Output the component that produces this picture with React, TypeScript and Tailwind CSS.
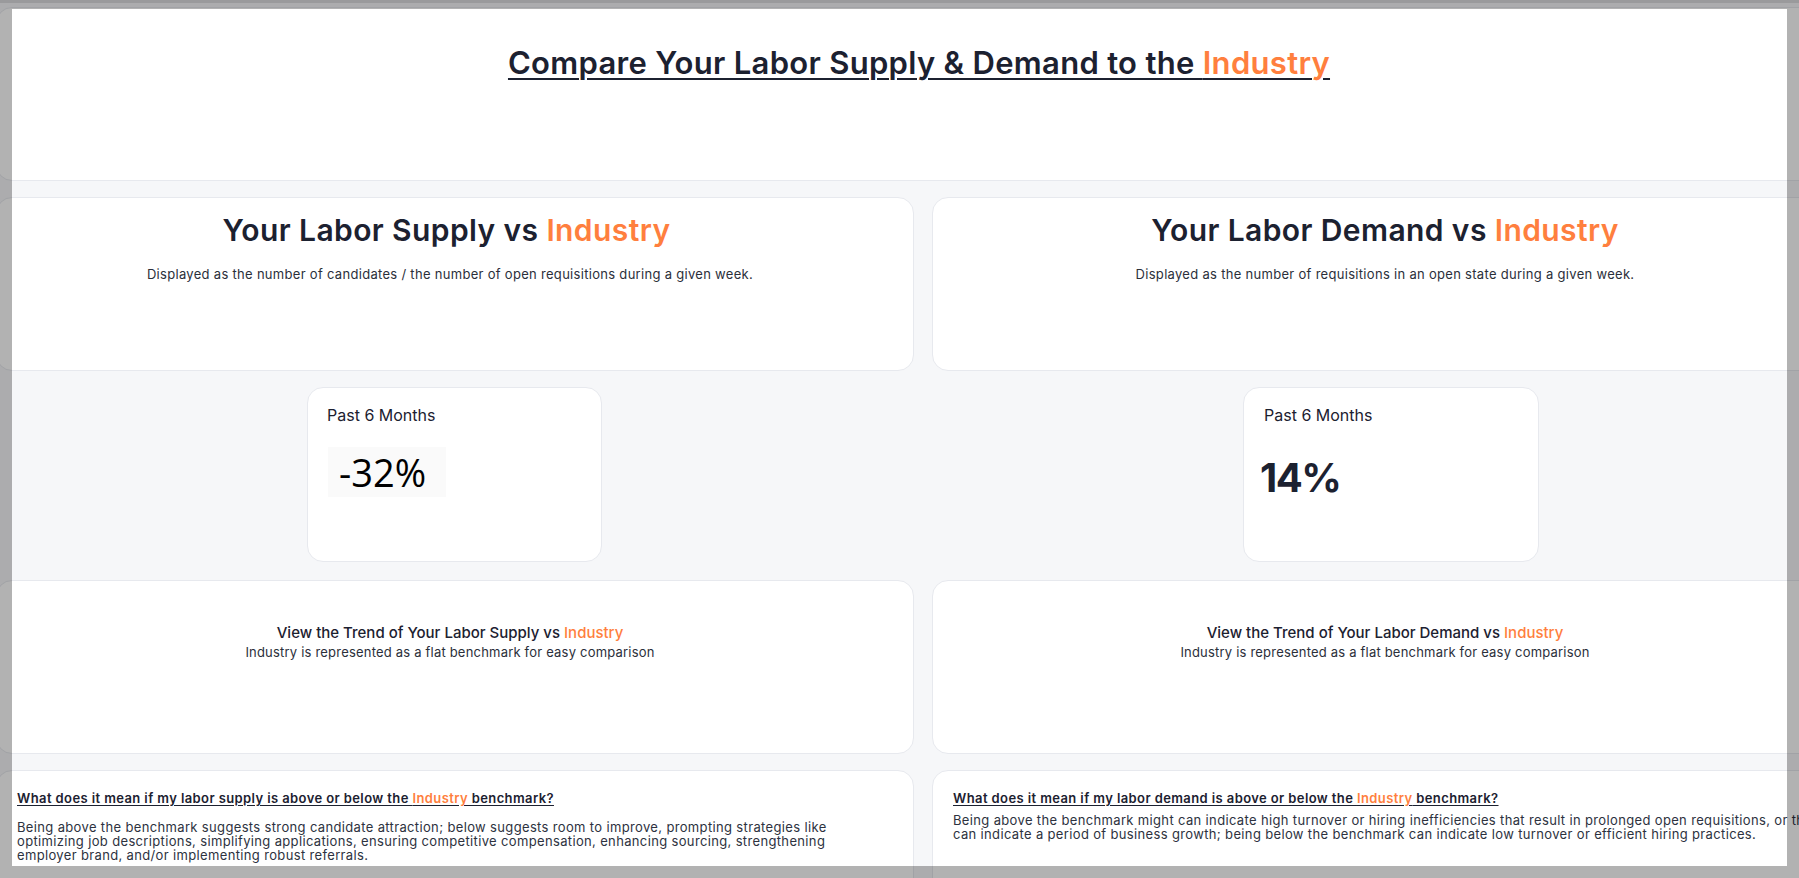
import React from "react";

const OR = "text-[#ff7f3e]";

function Card({ children, className = "" }: { children?: React.ReactNode; className?: string }) {
  return (
    <div className={`bg-white border border-[#e7e9ee] rounded-[16px] ${className}`}>{children}</div>
  );
}

export default function App() {
  return (
    <div
      className="relative w-[1799px] h-[878px] overflow-hidden bg-[#f6f7f9] text-[#1c2130]"
      style={{ fontFamily: "Inter, 'Noto Sans', Arial, sans-serif" }}
    >
      <div className="ml-[-4px] w-[1842px] flex flex-col pt-[7px]">
        {/* Header */}
        <Card className="h-[174px] pt-[37px] text-center pl-[4px]">
          <h1 className="text-[31px] leading-[36px] font-semibold underline decoration-2 underline-offset-[4px] tracking-[0.3px]">
            Compare Your Labor Supply &amp; Demand to the <span className={OR}>Industry</span>
          </h1>
        </Card>

        {/* Supply / demand titles */}
        <div className="grid grid-cols-[918px_906px] gap-[18px] mt-[16px]">
          <Card className="h-[174px] pt-[14px] text-center">
            <h2 className="text-[30px] leading-[36px] font-semibold tracking-[0.4px] pr-[17px]">
              Your Labor Supply vs <span className={OR}>Industry</span>
            </h2>
            <p className="mt-[17px] text-[13px] leading-[18px] tracking-[0.3px] text-[#2b2f3a] pr-[10px]">
              Displayed as the number of candidates / the number of open requisitions during a given week.
            </p>
          </Card>
          <Card className="h-[174px] pt-[14px] text-center">
            <h2 className="text-[30px] leading-[36px] font-semibold tracking-[0.4px]">
              Your Labor Demand vs <span className={OR}>Industry</span>
            </h2>
            <p className="mt-[17px] text-[13px] leading-[18px] tracking-[0.3px] text-[#2b2f3a]">
              Displayed as the number of requisitions in an open state during a given week.
            </p>
          </Card>
        </div>

        {/* KPI row */}
        <div className="grid grid-cols-[918px_906px] gap-[18px] h-[208px] pt-[16px]">
          <div>
            <Card className="ml-[311px] w-[295px] h-[175px] pt-[15px] pl-[19px]">
              <div className="text-[16px] leading-[24px] text-[#1c2130]">Past 6 Months</div>
              <div className="mt-[20px] ml-[1px] w-[118px] h-[50px] bg-[#fafafa] flex items-center pl-[11px]">
                <span
                  className="text-[38px] leading-[50px] text-black"
                  style={{ fontFamily: "'Open Sans', 'Noto Sans', sans-serif" }}
                >
                  -32%
                </span>
              </div>
            </Card>
          </div>
          <div>
            <Card className="ml-[311px] w-[296px] h-[175px] pt-[15px] pl-[20px]">
              <div className="text-[16px] leading-[24px] text-[#1c2130]">Past 6 Months</div>
              <div className="mt-[26px] ml-[-4px] text-[40px] leading-[50px] font-bold tracking-[-1.5px] text-[#1c2130]">
                14%
              </div>
            </Card>
          </div>
        </div>

        {/* Trend row */}
        <div className="grid grid-cols-[918px_906px] gap-[18px] mt-[1px]">
          <Card className="h-[174px] pt-[42px] text-center pr-[10px]">
            <div className="text-[15px] leading-[20px] font-medium">
              View the Trend of Your Labor Supply vs <span className={OR}>Industry</span>
            </div>
            <div className="text-[13px] leading-[18px] tracking-[0.2px] text-[#2b2f3a]">
              Industry is represented as a flat benchmark for easy comparison
            </div>
          </Card>
          <Card className="h-[174px] pt-[42px] text-center">
            <div className="text-[15px] leading-[20px] font-medium">
              View the Trend of Your Labor Demand vs <span className={OR}>Industry</span>
            </div>
            <div className="text-[13px] leading-[18px] tracking-[0.2px] text-[#2b2f3a]">
              Industry is represented as a flat benchmark for easy comparison
            </div>
          </Card>
        </div>

        {/* What does it mean row */}
        <div className="grid grid-cols-[918px_906px] gap-[18px] mt-[16px]">
          <Card className="h-[174px] pt-[18px] pl-[20px]">
            <div className="text-[13px] leading-[18px] font-semibold tracking-[0.4px] underline underline-offset-[2px]">
              What does it mean if my labor supply is above or below the <span className={OR}>Industry</span> benchmark?
            </div>
            <p className="mt-[13px] w-[850px] text-[13px] leading-[14px] tracking-[0.35px] text-[#2d3240]">
              Being above the benchmark suggests strong candidate attraction; below suggests room to improve, prompting
              strategies like optimizing job descriptions, simplifying applications, ensuring competitive compensation,
              enhancing sourcing, strengthening employer brand, and/or implementing robust referrals.
            </p>
          </Card>
          <Card className="h-[174px] pt-[18px] pl-[20px]">
            <div className="text-[13px] leading-[18px] font-semibold tracking-[0.4px] underline underline-offset-[2px]">
              What does it mean if my labor demand is above or below the <span className={OR}>Industry</span> benchmark?
            </div>
            <p className="mt-[6px] w-[875px] text-[13px] leading-[14px] tracking-[0.35px] text-[#2d3240]">
              Being above the benchmark might can indicate high turnover or hiring inefficiencies that result in prolonged
              open requisitions, or they can indicate a period of business growth; being below the benchmark can indicate
              low turnover or efficient hiring practices.
            </p>
          </Card>
        </div>
      </div>

      {/* Dimmed overlay around the capture window */}
      <div className="absolute left-0 top-0 w-full h-[9px] bg-black/30" />
      <div className="absolute left-0 top-0 w-full h-[3px] bg-black/10" />
      <div className="absolute left-0 top-[866px] w-full h-[12px] bg-black/30" />
      <div className="absolute left-0 top-[9px] w-[12px] h-[857px] bg-black/30" />
      <div className="absolute left-[1787px] top-[9px] w-[12px] h-[857px] bg-black/30" />
    </div>
  );
}
